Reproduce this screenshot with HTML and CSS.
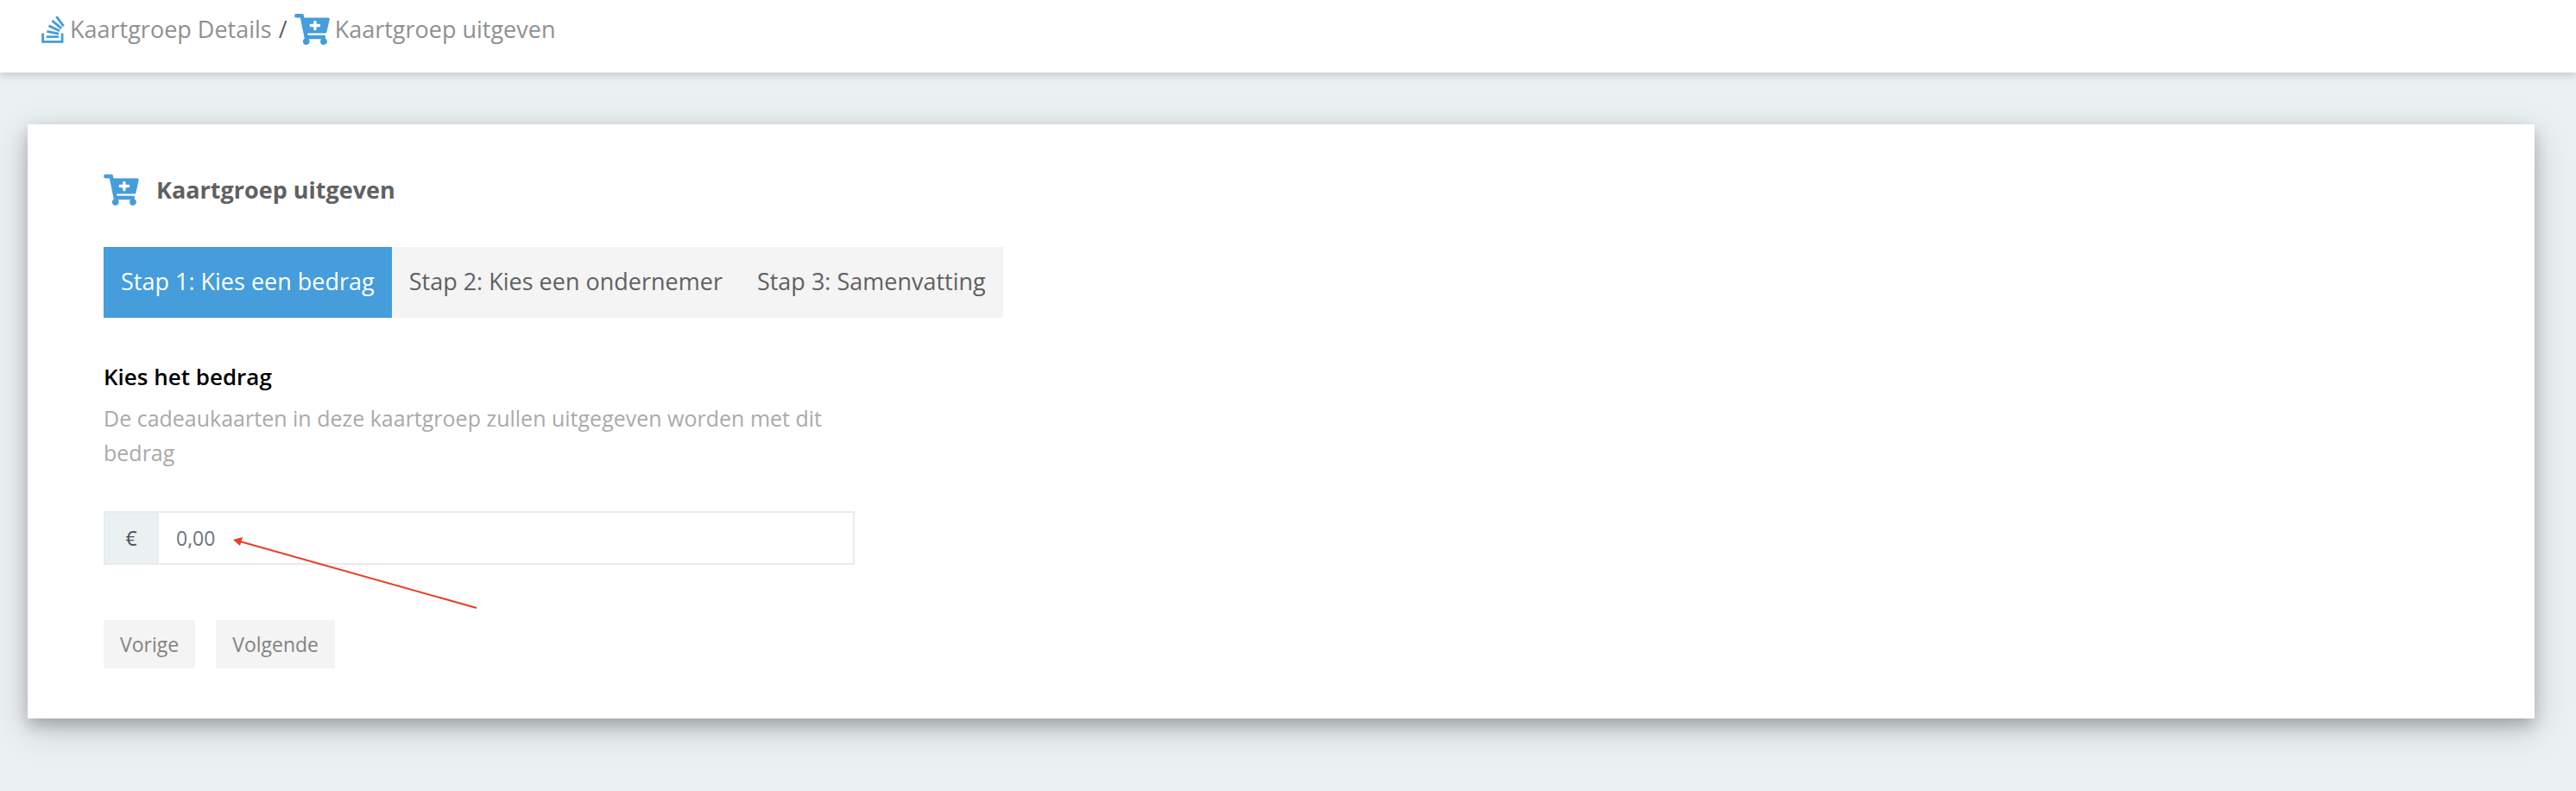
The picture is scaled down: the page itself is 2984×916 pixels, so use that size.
FILE: index.html
```
<!DOCTYPE html>
<html lang="nl">
<head>
    <meta charset="UTF-8">
    <meta name="viewport" content="width=device-width, initial-scale=1">
    <title>Kaartgroep uitgeven</title>
    <link rel="stylesheet" href="styles.css">
</head>
<body>
    <svg class="sprite" aria-hidden="true">
        <symbol id="icon-stack" viewBox="0 0 384 512">
            <path d="M290.7 311L95 269.7 86.8 309l195.7 41zm51-87L188.2 95.7l-25.5 30.8 153.5 128.3zm-31.2 39.7L129.2 179l-16.7 36.5L293.7 300zM262 32l-32 24 119.3 160.3 32-24zm20.5 328h-200v39.7h200zm39.7 80H42.7V320h-40v160h359.5V320h-40z"/>
        </symbol>
        <symbol id="icon-cart" viewBox="0 0 576 512">
            <path d="M504.717 320H211.572l6.545 32h268.418c15.401 0 26.816 14.301 23.403 29.319l-5.517 24.276C523.112 414.668 536 433.828 536 456c0 31.202-25.519 56.444-56.824 55.994-29.823-.429-54.35-24.631-55.155-54.447-.44-16.287 6.085-31.049 16.803-41.548H231.176C241.553 426.165 248 440.326 248 456c0 31.813-26.528 57.431-58.67 55.938-28.54-1.325-51.751-24.385-53.251-52.917-1.158-22.034 10.436-41.455 28.051-51.586L93.883 64H24C10.745 64 0 53.255 0 40V24C0 10.745 10.745 0 24 0h102.529c11.401 0 21.228 8.021 23.513 19.19L159.208 64H551.99c15.401 0 26.816 14.301 23.403 29.319l-47.273 208C525.637 312.246 515.923 320 504.717 320zM408 168h-48v-40c0-8.837-7.163-16-16-16h-16c-8.837 0-16 7.163-16 16v40h-48c-8.837 0-16 7.163-16 16v16c0 8.837 7.163 16 16 16h48v40c0 8.837 7.163 16 16 16h16c8.837 0 16-7.163 16-16v-40h48c8.837 0 16-7.163 16-16v-16c0-8.837-7.163-16-16-16z"/>
        </symbol>
    </svg>

    <header class="topbar">
        <nav class="breadcrumb">
            <a href="#"><svg class="icon icon-stack"><use href="#icon-stack"/></svg>Kaartgroep Details</a>
            <span class="separator">/</span>
            <a href="#"><svg class="icon icon-cart"><use href="#icon-cart"/></svg>Kaartgroep uitgeven</a>
        </nav>
    </header>

    <main class="card">
        <h1 class="card-title"><svg class="icon icon-cart"><use href="#icon-cart"/></svg>Kaartgroep uitgeven</h1>

        <ul class="steps">
            <li><a href="#" class="active">Stap 1: Kies een bedrag</a></li>
            <li><a href="#">Stap 2: Kies een ondernemer</a></li>
            <li><a href="#">Stap 3: Samenvatting</a></li>
        </ul>

        <form class="amount-form">
            <label for="bedrag">Kies het bedrag</label>
            <p class="help">De cadeaukaarten in deze kaartgroep zullen uitgegeven worden met dit bedrag</p>
            <div class="input-group">
                <span class="currency">€</span>
                <input type="text" id="bedrag" placeholder="0,00">
                <svg class="arrow" viewBox="0 0 284 84" aria-hidden="true">
                    <path class="line" d="M8 5L282 82"/>
                    <path class="head" d="M0 3L11 0L8 10z"/>
                </svg>
            </div>
            <div class="buttons">
                <button type="button">Vorige</button>
                <button type="button">Volgende</button>
            </div>
        </form>
    </main>
</body>
</html>
```
FILE: styles.css
```
* {
    box-sizing: border-box;
}
body {
    margin: 0;
    background-color: #ebf0f3;
    color: #5f6162;
    font-family: "Open Sans", "Noto Sans", sans-serif;
    font-size: 27px;
    line-height: 40px;
}
a {
    color: inherit;
    text-decoration: none;
}
.sprite {
    display: none;
}
.icon {
    flex: none;
    height: 36px;
    fill: #459ddb;
}
.icon-stack {
    width: 27px;
}
.icon-cart {
    width: 41px;
}
.topbar {
    padding: 14px 48px 30px;
    background-color: #fff;
    box-shadow: 0 2px 10px rgba(0, 0, 0, 0.2);
}
.breadcrumb {
    display: flex;
    align-items: center;
    gap: 8px;
}
.breadcrumb a {
    display: flex;
    align-items: center;
    gap: 6px;
    color: #8f9190;
}
.card {
    margin: 60px 48px 84px 32px;
    padding: 56px 88px 58px;
    background-color: #fff;
    box-shadow: 0 8px 16px rgba(0, 0, 0, 0.2), 0 12px 40px rgba(0, 0, 0, 0.19);
}
.card-title {
    display: flex;
    align-items: center;
    gap: 20px;
    margin: 0 0 46px;
    font-size: 27px;
}
.steps {
    display: flex;
    width: fit-content;
    margin: 0 0 48px;
    padding: 0;
    list-style: none;
    background-color: #f4f4f4;
}
.steps a {
    display: block;
    padding: 20px 20px 22px;
}
.steps .active {
    background-color: #459ddb;
    color: #fff;
}
.amount-form {
    max-width: 870px;
}
.amount-form label {
    display: block;
    color: #000;
    font-size: 26px;
    font-weight: 600;
}
.help {
    margin: 8px 0 48px;
    color: #aaa;
    font-size: 25px;
}
.input-group {
    position: relative;
    display: flex;
    border: 2px solid #ebebeb;
    font-size: 23px;
}
.currency {
    width: 62px;
    padding: 9px 0;
    border-right: 2px solid #ebebeb;
    background-color: #ebf0f3;
    color: #495057;
    text-align: center;
}
.input-group input {
    flex: 1;
    min-width: 0;
    padding: 0 20px;
    border: 0;
    outline: 0;
    font: inherit;
}
.input-group input::placeholder {
    color: #6c757d;
    opacity: 1;
}
/* arrow lies over the field and points at the amount */
.arrow {
    position: absolute;
    top: 28px;
    left: 148px;
    width: 284px;
    height: 84px;
    pointer-events: none;
}
.arrow .line {
    stroke: #ea3f24;
    stroke-width: 2;
}
.arrow .head {
    fill: #ea3f24;
}
.buttons {
    display: flex;
    gap: 24px;
    margin-top: 64px;
}
.buttons button {
    padding: 8px 19px;
    border: 0;
    background-color: #f4f4f4;
    color: #828282;
    font: inherit;
    font-size: 23px;
    cursor: pointer;
}
```
